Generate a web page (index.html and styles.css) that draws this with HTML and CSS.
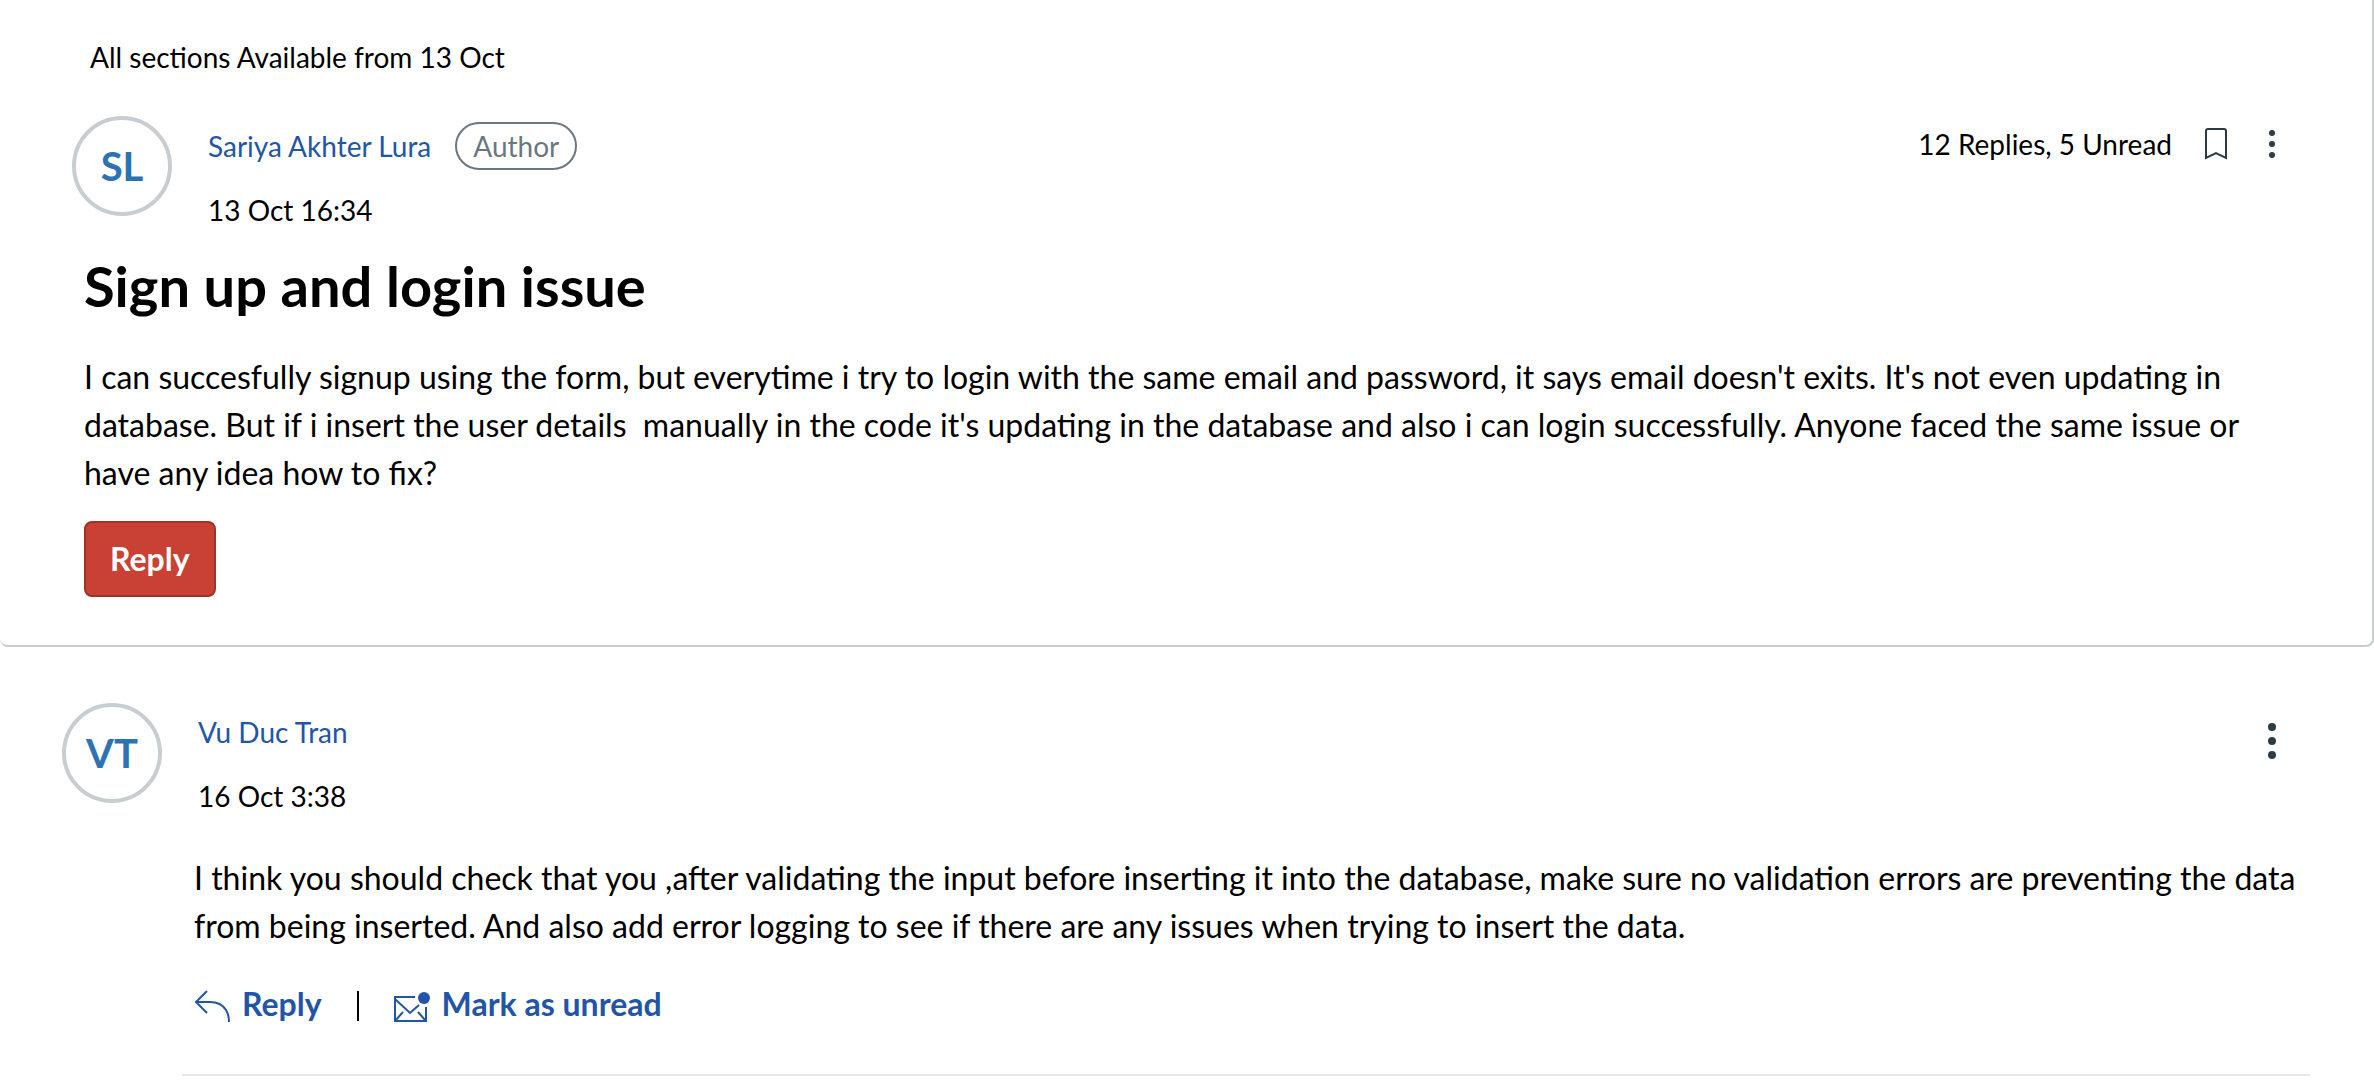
FILE: index.html
```html
<!DOCTYPE html>
<html lang="en">
<head>
<meta charset="utf-8">
<meta name="viewport" content="width=device-width, initial-scale=1">
<title>Sign up and login issue</title>
<link rel="stylesheet" href="styles.css">
</head>
<body>
<main>
  <article class="topic">
    <p class="availability">All sections Available from 13 Oct</p>
    <header class="post-header">
      <div class="avatar">SL</div>
      <div class="byline">
        <div class="author-row">
          <a class="author" href="#">Sariya Akhter Lura</a>
          <span class="pill">Author</span>
        </div>
        <time class="date">13 Oct 16:34</time>
      </div>
      <div class="tools">
        <span>12 Replies, 5 Unread</span>
        <button class="icon-button bookmark" type="button" aria-label="Subscribe">
          <svg width="22" height="34" viewBox="0 0 22 34" fill="none" stroke="currentColor" stroke-width="2"><path d="M1 31V4Q1 2 3 2H19Q21 2 21 4V31L11 26Z"/></svg>
        </button>
        <button class="icon-button" type="button" aria-label="Manage discussion">
          <svg width="6" height="34" viewBox="0 0 6 34" fill="currentColor"><circle cx="3" cy="6" r="3"/><circle cx="3" cy="17" r="3"/><circle cx="3" cy="28" r="3"/></svg>
        </button>
      </div>
    </header>
    <h1 class="title">Sign up and login issue</h1>
    <p class="message">I can succesfully signup using the form, but everytime i try to login with the same email and password, it says email doesn't exits. It's not even updating in database. But if i insert the user details&nbsp; manually in the code it's updating in the database and also i can login successfully. Anyone faced the same issue or have any idea how to fix?</p>
    <button class="reply-button" type="button">Reply</button>
  </article>

  <article class="entry">
    <div class="avatar">VT</div>
    <div class="entry-content">
      <header class="entry-header">
        <div class="entry-byline">
          <a class="author" href="#">Vu Duc Tran</a>
          <time class="date">16 Oct 3:38</time>
        </div>
        <button class="icon-button" type="button" aria-label="Manage reply">
          <svg width="8" height="36" viewBox="0 0 8 36" fill="currentColor"><circle cx="4" cy="4" r="4"/><circle cx="4" cy="18" r="4"/><circle cx="4" cy="32" r="4"/></svg>
        </button>
      </header>
      <p class="message">I think you should check that you ,after validating the input before inserting it into the database, make sure no validation errors are preventing the data from being inserted. And also add error logging to see if there are any issues when trying to insert the data.</p>
      <div class="actions">
        <button class="action" type="button">
          <svg width="36" height="40" viewBox="0 -6 36 40" fill="none" stroke="currentColor" stroke-width="2"><path d="M13 1L2 12L13 23M2 12H16Q27 12 32 20Q35 25 35 32"/></svg>
          Reply
        </button>
        <span class="divider"></span>
        <button class="action" type="button">
          <svg width="36" height="40" viewBox="0 -6 36 40" fill="none" stroke="currentColor" stroke-width="2"><path d="M21 7H1V31H32V17M1 9L16 23L25 15M1 31L9 22M32 31L24 22"/><circle cx="30" cy="8" r="6" fill="currentColor" stroke="none"/></svg>
          Mark as unread
        </button>
      </div>
    </div>
  </article>
</main>
</body>
</html>
```
FILE: styles.css
```css
* {
  box-sizing: border-box;
}

body {
  margin: 0;
  background: #fff;
  color: #000;
  font-family: Lato, Carlito, sans-serif;
  font-size: 28px;
  line-height: 42px;
}

p,
h1 {
  margin: 0;
}

button {
  padding: 0;
  border: 0;
  background: none;
  font: inherit;
  cursor: pointer;
}

svg {
  display: block;
  flex: none;
}

.topic {
  padding: 36px 84px 48px;
  border: solid #c7cdd1;
  border-width: 0 2px 2px 0;
  border-radius: 0 0 8px 8px;
}

.availability {
  padding-left: 6px;
}

.post-header {
  display: flex;
  align-items: flex-start;
  margin: 38px 0 20px -12px;
}

.avatar {
  display: flex;
  flex: none;
  align-items: center;
  justify-content: center;
  width: 100px;
  height: 100px;
  border: 4px solid #c7cdd1;
  border-radius: 50%;
  color: #2d72b4;
  font-size: 40px;
  font-weight: 700;
}

.byline {
  flex: 1;
  padding: 6px 0 0 36px;
}

.author-row {
  display: flex;
  align-items: center;
  gap: 24px;
  margin-bottom: 19px;
}

.author {
  color: #2255a8;
  text-decoration: none;
}

.date {
  display: block;
}

.pill {
  padding: 1px 16px;
  height: 48px;
  border: 2px solid #6b7780;
  border-radius: 24px;
  color: #6b7780;
}

.tools {
  display: flex;
  align-items: center;
  padding: 7px 13px 0 0;
}

.icon-button {
  margin-left: 42px;
  color: #2d3b45;
}

.bookmark {
  margin-left: 33px;
}

.title {
  margin-bottom: 32px;
  font-size: 56px;
  line-height: 70px;
}

.message {
  font-size: 32px;
  line-height: 48px;
}

.reply-button {
  margin-top: 24px;
  padding: 12px 24px;
  border: 2px solid #a3312a;
  border-radius: 8px;
  background: #c94035;
  color: #fff;
  font-size: 32px;
  font-weight: 700;
  line-height: 48px;
}

.entry {
  display: flex;
  padding: 56px 64px 0 62px;
}

.entry-content {
  flex: 1;
  margin-left: 20px;
  padding: 8px 0 46px 12px;
  border-bottom: 2px solid #e8e8e8;
}

.entry-header {
  display: flex;
  align-items: flex-start;
  justify-content: space-between;
  margin-bottom: 37px;
  padding: 0 34px 0 4px;
}

.entry-header .icon-button {
  margin-top: 12px;
}

.entry-byline {
  display: grid;
  gap: 22px;
}

.actions {
  display: flex;
  align-items: center;
  margin-top: 30px;
}

.action {
  display: flex;
  align-items: center;
  gap: 12px;
  color: #2255a8;
  font-size: 32px;
  font-weight: 700;
  line-height: 48px;
}

.divider {
  width: 2px;
  height: 30px;
  margin: 4px 35px 0;
  background: #000;
}
```
